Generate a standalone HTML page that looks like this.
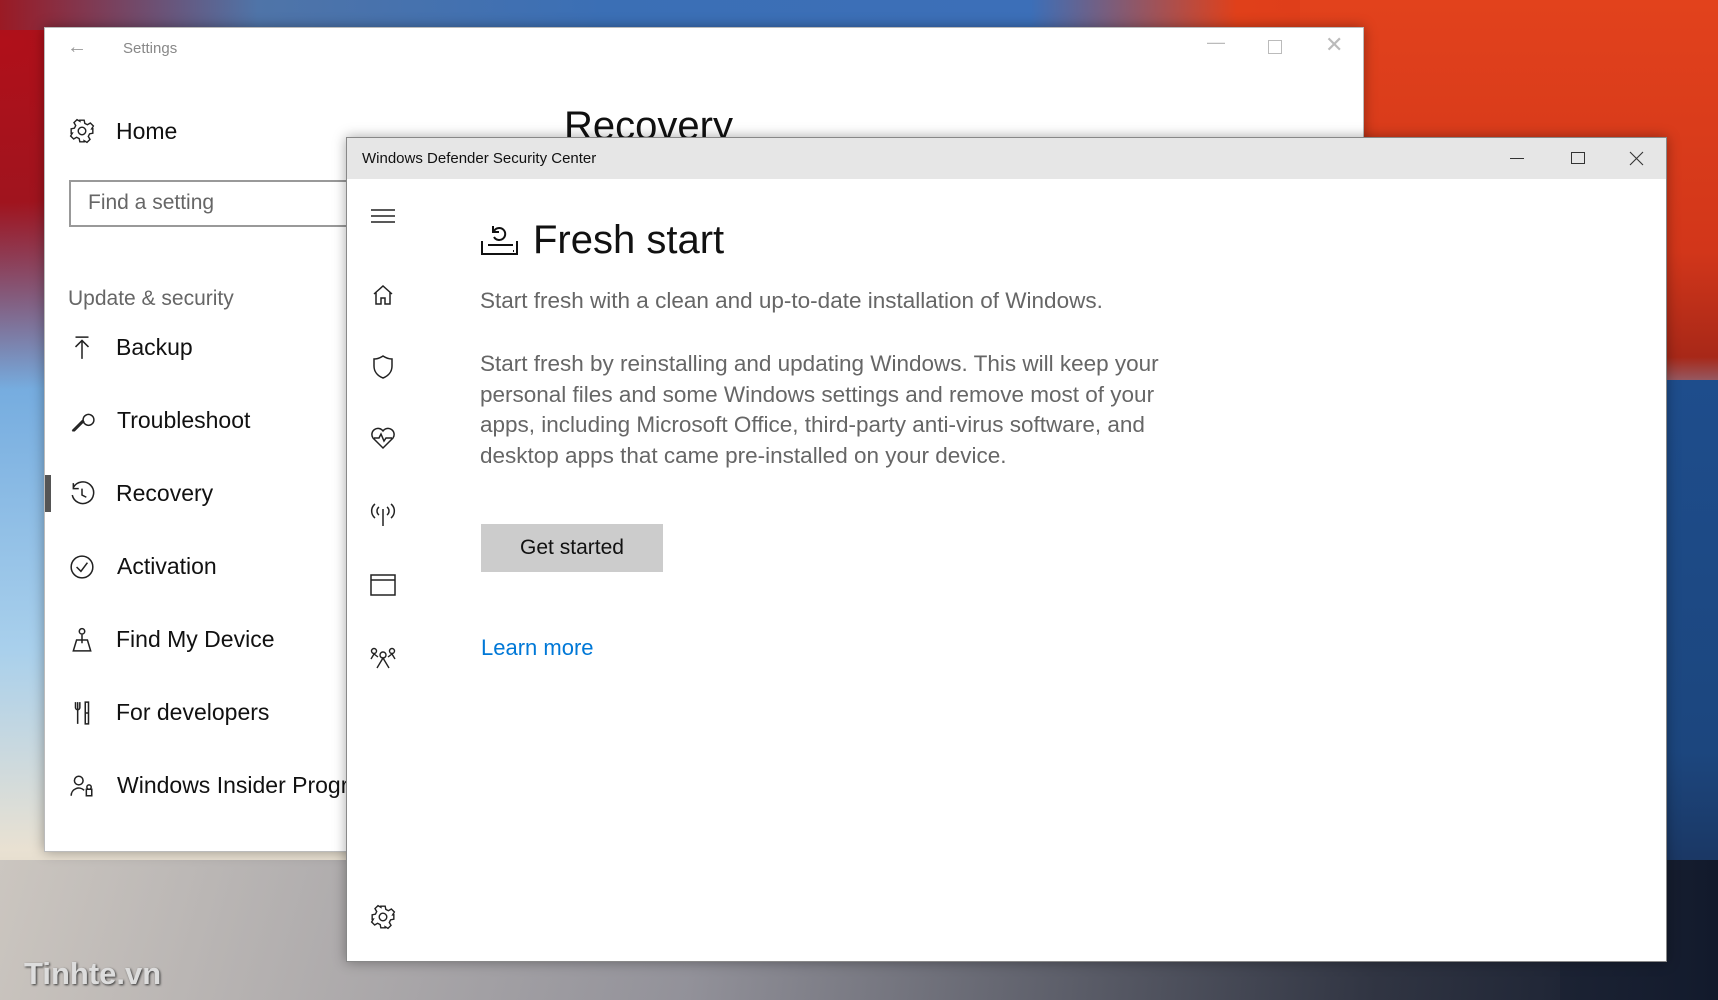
<!DOCTYPE html>
<html><head><meta charset="utf-8">
<style>
*{margin:0;padding:0;box-sizing:border-box}
body{width:1718px;height:1000px;overflow:hidden;position:relative;font-family:"Liberation Sans",sans-serif;background:#5a8fc6}
.abs{position:absolute}
.bg1{left:0;top:0;width:1718px;height:1000px;background:linear-gradient(180deg,#3d7cc4 0%,#78aee0 40%,#a9d0ec 65%,#e9e1d2 85%,#c9c0b6 100%)}
.leafTL{left:0;top:0;width:700px;height:420px;background:radial-gradient(ellipse at 0% 10%,#b0101a 0%,#a0141e 30%,rgba(160,20,30,0) 65%)}
.leafTop{left:0;top:0;width:1718px;height:30px;background:linear-gradient(90deg,#9a1a24 0%,#4f74a8 15%,#3b6fb5 35%,#3c6fb8 60%,#e0401a 72%,#d8301a 100%)}
.leafR{left:1300px;top:0;width:418px;height:420px;background:linear-gradient(180deg,#e2421c 0%,#d2361a 60%,#a82818 85%,rgba(30,60,110,0) 100%)}
.skyR{left:1560px;top:380px;width:158px;height:620px;background:linear-gradient(180deg,#1e4d8c 0%,#1c467e 60%,#1a2f55 88%,#0f1a30 100%)}
.mtn{left:0;top:860px;width:1718px;height:140px;background:linear-gradient(90deg,rgba(200,195,190,.9) 0%,rgba(140,140,150,.9) 40%,rgba(40,45,60,.95) 80%,#121a2c 100%)}
.win{background:#fff;box-shadow:0 0 12px rgba(0,0,0,.35)}
.ico{position:absolute}
.nav{position:absolute;left:115px;font-size:23px;color:#111}
</style></head><body>
<div class="abs bg1"></div>
<div class="abs leafTL"></div>
<div class="abs leafTop"></div>
<div class="abs leafR"></div>
<div class="abs skyR"></div>
<div class="abs mtn"></div>
<div class="abs" style="left:24px;top:956px;font-size:31px;font-weight:bold;color:#ddd;text-shadow:1px 1px 2px #333">Tinhte.vn</div>

<!-- Settings window -->
<div class="abs win" style="left:44px;top:27px;width:1320px;height:825px;border:1px solid #bbb">
  <div class="abs" style="left:22px;top:8px;font-size:20px;color:#999">&#8592;</div>
  <div class="abs" style="left:78px;top:12px;font-size:15px;color:#888">Settings</div>
  <div class="abs" style="left:1162px;top:4px;font-size:18px;color:#bbb">&#8212;</div>
  <div class="abs" style="left:1223px;top:12px;width:14px;height:14px;border:1px solid #bbb"></div>
  <div class="abs" style="left:1280px;top:4px;font-size:22px;color:#bbb">&#10005;</div>
  <svg class="ico" style="left:24px;top:90px" width="26" height="26" viewBox="0 0 24 24" fill="none" stroke="#222" stroke-width="1.3"><circle cx="12" cy="12" r="3.5"/><path d="M10 2h4l.6 3 2.4 1.2 2.7-1.6 2.8 2.8-1.6 2.7L22 10v4l-3 .6-1.2 2.4 1.6 2.7-2.8 2.8-2.7-1.6L14 22h-4l-.6-3-2.4-1.2-2.7 1.6-2.8-2.8 1.6-2.7L2 14v-4l3-.6 1.2-2.4-1.6-2.7 2.8-2.8 2.7 1.6z"/></svg>
  <div class="nav" style="left:71px;top:90px;font-size:23px">Home</div>
  <div class="abs" style="left:24px;top:152px;width:290px;height:47px;border:2px solid #999"></div>
  <div class="abs" style="left:43px;top:163px;font-size:21px;color:#666">Find a setting</div>
  <div class="abs" style="left:23px;top:259px;font-size:21px;color:#666">Update &amp; security</div>
  <div class="abs" style="left:0;top:447px;width:6px;height:37px;background:#555"></div>
  <svg class="ico" style="left:24px;top:307px" width="26" height="26" viewBox="0 0 24 24" fill="none" stroke="#222" stroke-width="1.4"><path d="M6 2h12M12 22V5M6 11l6-6 6 6"/></svg>
  <div class="nav" style="left:71px;top:306px">Backup</div>
  <svg class="ico" style="left:24px;top:380px" width="26" height="26" viewBox="0 0 24 24" fill="none" stroke="#222" stroke-width="1.4"><path d="M3 21l10-10a5 5 0 1 0 0-.1M3 21l2 0 9-9"/></svg>
  <div class="nav" style="left:72px;top:379px">Troubleshoot</div>
  <svg class="ico" style="left:24px;top:453px" width="26" height="26" viewBox="0 0 24 24" fill="none" stroke="#222" stroke-width="1.4"><path d="M4 6a10 10 0 1 1-1 7M4 2v5h5M12 7v6l4 2"/></svg>
  <div class="nav" style="left:71px;top:452px">Recovery</div>
  <svg class="ico" style="left:24px;top:526px" width="26" height="26" viewBox="0 0 24 24" fill="none" stroke="#222" stroke-width="1.4"><circle cx="12" cy="12" r="10"/><path d="M7 12l4 4 6-8"/></svg>
  <div class="nav" style="left:72px;top:525px">Activation</div>
  <svg class="ico" style="left:24px;top:599px" width="26" height="26" viewBox="0 0 24 24" fill="none" stroke="#222" stroke-width="1.4"><circle cx="12" cy="4" r="2.5"/><path d="M12 7v8M4 22l3-10h10l3 10z"/></svg>
  <div class="nav" style="left:71px;top:598px">Find My Device</div>
  <svg class="ico" style="left:24px;top:672px" width="26" height="26" viewBox="0 0 24 24" fill="none" stroke="#222" stroke-width="1.4"><path d="M8 2v20M6 2v5a2 2 0 0 0 4 0V2M15 2h3v20h-3zM15 12h3"/></svg>
  <div class="nav" style="left:71px;top:671px">For developers</div>
  <svg class="ico" style="left:24px;top:745px" width="26" height="26" viewBox="0 0 24 24" fill="none" stroke="#222" stroke-width="1.4"><circle cx="9" cy="7" r="4"/><path d="M2 21a7 7 0 0 1 12-5"/><rect x="16" y="15" width="5" height="6"/><circle cx="18.5" cy="13" r="2"/></svg>
  <div class="nav" style="left:72px;top:744px">Windows Insider Program</div>
  <div class="abs" style="left:519px;top:76px;font-size:40px;color:#111">Recovery</div>
</div>

<!-- Defender window -->
<div class="abs win" style="left:346px;top:137px;width:1321px;height:825px;border:1px solid #888;overflow:hidden">
  <div class="abs" style="left:0;top:0;width:100%;height:41px;background:#e6e6e6"></div>
  <div class="abs" style="left:15px;top:12px;font-size:15px;color:#111">Windows Defender Security Center</div>
  <div class="abs" style="left:1163px;top:20px;width:14px;height:1px;background:#333"></div>
  <div class="abs" style="left:1224px;top:14px;width:14px;height:12px;border:1px solid #333"></div>
  <svg class="ico" style="left:1282px;top:13px" width="15" height="15" viewBox="0 0 15 15" stroke="#333" stroke-width="1.1"><path d="M1 1l13 13M14 1L1 14"/></svg>

  <svg class="ico" style="left:23px;top:69px" width="26" height="18" viewBox="0 0 26 18" stroke="#222" stroke-width="1.5"><path d="M1 3h24M1 9h24M1 15h24"/></svg>
  <svg class="ico" style="left:24px;top:145px" width="24" height="24" viewBox="0 0 24 24" fill="none" stroke="#222" stroke-width="1.5"><path d="M3 11L12 3l9 8M5 9v12h5v-6h4v6h5V9"/></svg>
  <svg class="ico" style="left:24px;top:216px" width="24" height="26" viewBox="0 0 24 26" fill="none" stroke="#222" stroke-width="1.5"><path d="M12 2c3 2 6 3 9 3v7c0 6-4 10-9 12-5-2-9-6-9-12V5c3 0 6-1 9-3z"/></svg>
  <svg class="ico" style="left:23px;top:288px" width="26" height="24" viewBox="0 0 26 24" fill="none" stroke="#222" stroke-width="1.5"><path d="M13 22L3 12a5.5 5.5 0 0 1 10-7 5.5 5.5 0 0 1 10 7zM4 12h5l2-4 3 7 2-3h6"/></svg>
  <svg class="ico" style="left:22px;top:363px" width="28" height="26" viewBox="0 0 28 26" fill="none" stroke="#222" stroke-width="1.5"><path d="M14 8v17M10 6a5 5 0 0 0 0 8M18 6a5 5 0 0 1 0 8M6 3a9 9 0 0 0 0 14M22 3a9 9 0 0 1 0 14"/></svg>
  <svg class="ico" style="left:23px;top:436px" width="26" height="22" viewBox="0 0 26 22" fill="none" stroke="#222" stroke-width="1.5"><rect x="1" y="1" width="24" height="20"/><path d="M1 6h24"/></svg>
  <svg class="ico" style="left:22px;top:508px" width="28" height="24" viewBox="0 0 28 24" fill="none" stroke="#222" stroke-width="1.4"><circle cx="5" cy="5" r="2.5"/><circle cx="23" cy="5" r="2.5"/><circle cx="14" cy="9" r="3"/><path d="M2 13l3-5 4 3M26 13l-3-5-4 3M8 22l6-10 6 10"/></svg>
  <svg class="ico" style="left:23px;top:766px" width="26" height="26" viewBox="0 0 24 24" fill="none" stroke="#222" stroke-width="1.3"><circle cx="12" cy="12" r="3.5"/><path d="M10 2h4l.6 3 2.4 1.2 2.7-1.6 2.8 2.8-1.6 2.7L22 10v4l-3 .6-1.2 2.4 1.6 2.7-2.8 2.8-2.7-1.6L14 22h-4l-.6-3-2.4-1.2-2.7 1.6-2.8-2.8 1.6-2.7L2 14v-4l3-.6 1.2-2.4-1.6-2.7 2.8-2.8 2.7 1.6z"/></svg>

  <svg class="ico" style="left:133px;top:83px" width="39" height="35" viewBox="0 0 39 35" fill="none" stroke="#111" stroke-width="2"><path d="M2 20v13h35V20M8 24h25M14 10a6 6 0 1 1 0 6M13 5v6h6M33 30h1"/></svg>
  <div class="abs" style="left:186px;top:80px;font-size:40px;color:#111">Fresh start</div>
  <div class="abs" style="left:133px;top:150px;font-size:22.5px;color:#666;white-space:nowrap">Start fresh with a clean and up-to-date installation of Windows.</div>
  <div class="abs" style="left:133px;top:211px;font-size:22.5px;line-height:30.5px;color:#666;white-space:nowrap">Start fresh by reinstalling and updating Windows. This will keep your<br>personal files and some Windows settings and remove most of your<br>apps, including Microsoft Office, third-party anti-virus software, and<br>desktop apps that came pre-installed on your device.</div>
  <div class="abs" style="left:134px;top:386px;width:182px;height:48px;background:#ccc;font-size:21px;color:#111;text-align:center;line-height:48px">Get started</div>
  <div class="abs" style="left:134px;top:497px;font-size:22px;color:#0078d7">Learn more</div>
</div>
</body></html>
